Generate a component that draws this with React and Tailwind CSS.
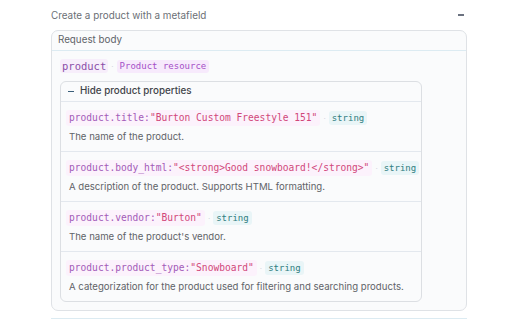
import React from 'react';

const mono = { fontFamily: '"DejaVu Sans Mono", "Liberation Mono", monospace' };

const props = [
  { key: 'product.title', value: '"Burton Custom Freestyle 151"', desc: 'The name of the product.' },
  { key: 'product.body_html', value: '"<strong>Good snowboard!</strong>"', desc: 'A description of the product. Supports HTML formatting.' },
  { key: 'product.vendor', value: '"Burton"', desc: "The name of the product's vendor." },
  { key: 'product.product_type', value: '"Snowboard"', desc: 'A categorization for the product used for filtering and searching products.' },
];

const Dot = () => <span className="mx-[3px] text-[8px] text-gray-300">·</span>;

const PropRow = ({ item, last }) => (
  <div className={`px-[5px] pt-[8px] pb-[7px] ${last ? '' : 'border-b border-[#e3e8ee]'}`}>
    <div className="flex items-center h-[16px] whitespace-nowrap">
      <span className="bg-[#fcf2fc] rounded-[3px] px-[3px] text-[9.6px] leading-[16px]" style={mono}>
        <span className="text-[#a35bb8]">{item.key}:</span>
        <span className="text-[#d1477a]">{item.value}</span>
      </span>
      <Dot />
      <span className="bg-[#e9f5f7] text-[#2f7d80] rounded-[3px] px-[3px] text-[9px] leading-[14px]" style={mono}>string</span>
    </div>
    <div className="mt-[4px] pl-[3px] text-[9.6px] leading-[14px] text-[#5f6368] whitespace-nowrap">{item.desc}</div>
  </div>
);

export default function App() {
  return (
    <div className="w-[512px] h-[322px] bg-white overflow-hidden" style={{ fontFamily: 'Inter, "Noto Sans", sans-serif' }}>
      <div className="mx-[51px] w-[416px]">
        <div className="flex items-center justify-between h-[30px] text-[9.9px] text-[#6b6f76]">
          <span>Create a product with a metafield</span>
          <span className="w-[6px] h-[1.5px] bg-[#6b7280] mr-[3px]"></span>
        </div>
        <div className="border border-[#dfe2e6] rounded-[7px] bg-[#fafbfc]">
          <div className="h-[20px] px-[6px] flex items-center text-[9.8px] text-[#5f6368] border-b border-[#dcebf2]">Request body</div>
          <div className="px-[8px] pt-[8px] pb-[8px]">
            <div className="flex items-center h-[14px]">
              <span className="bg-[#f7eefb] text-[#8b4ea8] rounded-[3px] px-[2px] text-[10.5px] leading-[14px]" style={mono}>product</span>
              <Dot />
              <span className="bg-[#f7eafc] text-[#a54fc7] rounded-[3px] px-[3px] text-[9px] leading-[13px]" style={mono}>Product resource</span>
            </div>
            <div className="mt-[8px] w-[362px] border border-[#dcdfe3] rounded-[6px] bg-[#fafbfc]">
              <div className="h-[20px] px-[7px] flex items-center gap-[6px] text-[9.8px] font-medium text-[#3f4449] border-b border-[#e3e8ee]">
                <span className="w-[6px] h-[1.5px] bg-[#3b5f7a]"></span>
                <span>Hide product properties</span>
              </div>
              {props.map((p, i) => (
                <PropRow key={p.key} item={p} last={i === props.length - 1} />
              ))}
            </div>
          </div>
        </div>
        <div className="mt-[7px] border-t border-[#dcebf2]"></div>
      </div>
    </div>
  );
}
